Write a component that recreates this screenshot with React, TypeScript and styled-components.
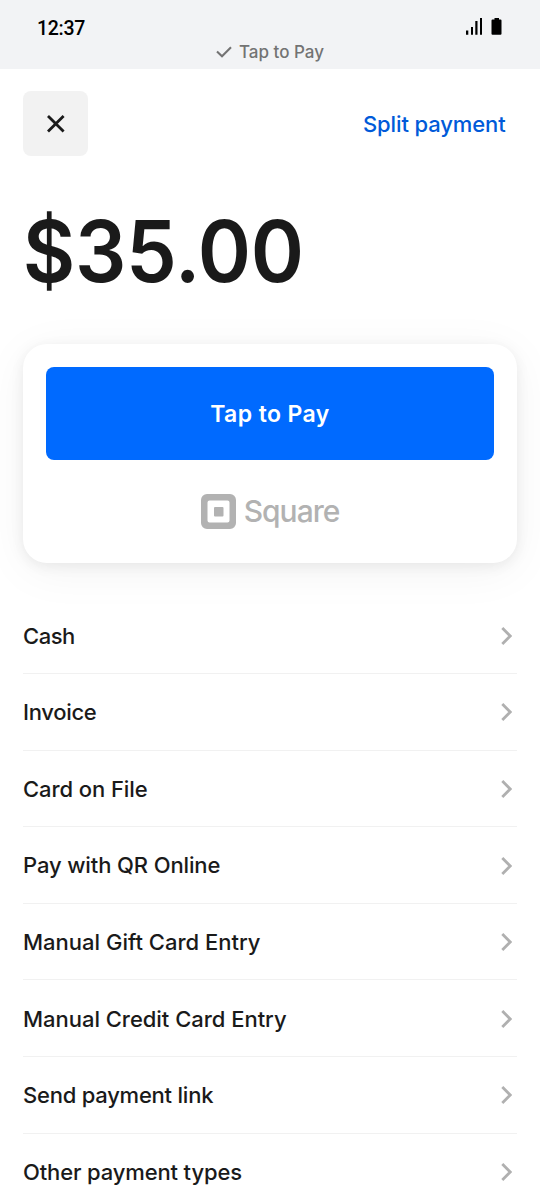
import React from 'react';
import styled, { createGlobalStyle } from 'styled-components';

const GlobalStyle = createGlobalStyle`
  * { box-sizing: border-box; }
  body { margin: 0; background: #fff; overflow: hidden; }
  button { border: 0; padding: 0; margin: 0; font: inherit; color: inherit; background: none; }
`;

const Screen = styled.main`
  width: 540px;
  height: 1200px;
  overflow: hidden;
  display: flex;
  flex-direction: column;
  background: #fff;
  color: #1a1a1a;
  font-family: Inter, 'Liberation Sans', sans-serif;
  font-weight: 500;
`;

const StatusBar = styled.header`
  flex: none;
  height: 69px;
  padding-top: 16px;
  background: #f2f3f5;
`;

const StatusTop = styled.div`
  height: 24px;
  padding: 0 38px 0 37px;
  display: flex;
  align-items: flex-start;
  justify-content: space-between;
  color: #000;
`;

const Clock = styled.span`
  padding-top: 1px;
  font: 500 19.5px/24px Roboto, sans-serif;
  letter-spacing: -0.3px;
`;

const ReaderStatus = styled.div`
  height: 24px;
  display: flex;
  align-items: center;
  justify-content: center;
  gap: 7px;
  color: #737373;
`;

const Label = styled.span<{ $size: number; $spacing?: number }>`
  font-size: ${(p) => p.$size}px;
  line-height: 1.2;
  letter-spacing: ${(p) => p.$spacing ?? 0}px;
  white-space: nowrap;
`;

const Toolbar = styled.nav`
  flex: none;
  display: flex;
  align-items: center;
  justify-content: space-between;
  padding: 22px 34.5px 0 23px;
`;

const CloseButton = styled.button`
  width: 65px;
  height: 65px;
  border-radius: 8px;
  background: #f2f2f2;
  display: grid;
  place-items: center;
`;

const SplitButton = styled.button`
  padding-top: 1px;
  color: #005ad9;
`;

const Amount = styled.h1`
  flex: none;
  align-self: flex-start;
  margin: 44px 0 0;
  padding-left: 24px;
  height: 104px;
  font-size: 85px;
  line-height: 104px;
  font-weight: 600;
  letter-spacing: -0.3px;
  transform: scaleX(0.95);
  transform-origin: 0 50%;
`;

const Card = styled.section`
  flex: none;
  margin: 40px 23px 0;
  height: 219px;
  padding: 23px;
  border-radius: 24px;
  background: #fff;
  box-shadow: 0 8px 48px rgba(0, 0, 0, 0.05), 0 3px 14px rgba(0, 0, 0, 0.07);
  display: flex;
  flex-direction: column;
  align-items: center;
`;

const PayButton = styled.button`
  width: 448px;
  height: 92.5px;
  flex: none;
  padding-top: 3px;
  border-radius: 8px;
  background: #006aff;
  color: #fff;
  font-weight: 600;
`;

const Brand = styled.div`
  margin-top: 33.5px;
  display: flex;
  align-items: center;
  gap: 8px;
  color: #b2b2b2;
`;

const Methods = styled.ul`
  list-style: none;
  margin: 34.5px 23px 0;
  padding: 0;
`;

const Method = styled.li`
  height: 76.6px;
  padding: 1px 5px 0 0;
  display: flex;
  align-items: center;
  justify-content: space-between;
  border-bottom: 1.5px solid #f1f1f1;
`;

const methods: { name: string; spacing: number }[] = [
  { name: 'Cash', spacing: -0.5 },
  { name: 'Invoice', spacing: -0.3 },
  { name: 'Card on File', spacing: -0.08 },
  { name: 'Pay with QR Online', spacing: -0.12 },
  { name: 'Manual Gift Card Entry', spacing: 0 },
  { name: 'Manual Credit Card Entry', spacing: -0.03 },
  { name: 'Send payment link', spacing: -0.23 },
  { name: 'Other payment types', spacing: -0.14 },
];

const StatusIcons = () => (
  <svg width="37" height="20" viewBox="0 0 37 20" fill="currentColor">
    <path d="M1 14.500h2.300V18.800H1zM6 11h2v7.800H6zM10.300 5h2.200v13.800h-2.200zM15 2h2v16.800h-2z" />
    <path d="M29.500 2h4.500v1.500h1.500a1 1 0 0 1 1 1v13.300a1 1 0 0 1-1 1h-8a1 1 0 0 1-1-1V4.500a1 1 0 0 1 1-1h2z" />
  </svg>
);

const Check = () => (
  <svg width="16" height="12" viewBox="0 0 16 12" fill="none" stroke="currentColor" strokeWidth="2.100">
    <path d="M1 5.500 6 10.200 15 1.300" />
  </svg>
);

const Cross = () => (
  <svg width="20" height="20" viewBox="0 0 20 20" fill="none" stroke="#1a1a1a" strokeWidth="2.800">
    <path d="m2 2 15.600 15.600M17.600 2 2 17.600" />
  </svg>
);

const Chevron = () => (
  <svg width="11" height="20" viewBox="0 0 11 20" fill="none" stroke="#b0b0b0" strokeWidth="2.800">
    <path d="m1.300 2 7.900 8-7.900 8" />
  </svg>
);

const SquareMark = () => (
  <svg width="35" height="35" viewBox="0 0 35 35" fill="currentColor">
    <path
      fillRule="evenodd"
      d="M6 0h23a6 6 0 0 1 6 6v23a6 6 0 0 1-6 6H6a6 6 0 0 1-6-6V6a6 6 0 0 1 6-6Zm2.500 6.500a2 2 0 0 0-2 2v18a2 2 0 0 0 2 2h18a2 2 0 0 0 2-2v-18a2 2 0 0 0-2-2Z"
    />
    <rect x="13" y="13" width="9.500" height="9.500" rx="1" />
  </svg>
);

export default function App() {
  return (
    <Screen>
      <GlobalStyle />
      <StatusBar>
        <StatusTop>
          <Clock>12:37</Clock>
          <StatusIcons />
        </StatusTop>
        <ReaderStatus>
          <Check />
          <Label $size={17}>Tap to Pay</Label>
        </ReaderStatus>
      </StatusBar>
      <Toolbar>
        <CloseButton aria-label="Close"><Cross /></CloseButton>
        <SplitButton><Label $size={22} $spacing={-0.12}>Split payment</Label></SplitButton>
      </Toolbar>
      <Amount>$35.00</Amount>
      <Card>
        <PayButton><Label $size={23} $spacing={0.4}>Tap to Pay</Label></PayButton>
        <Brand>
          <SquareMark />
          <Label $size={30} $spacing={-1}>Square</Label>
        </Brand>
      </Card>
      <Methods>
        {methods.map((m) => (
          <Method key={m.name}>
            <Label $size={22} $spacing={m.spacing}>{m.name}</Label>
            <Chevron />
          </Method>
        ))}
      </Methods>
    </Screen>
  );
}
